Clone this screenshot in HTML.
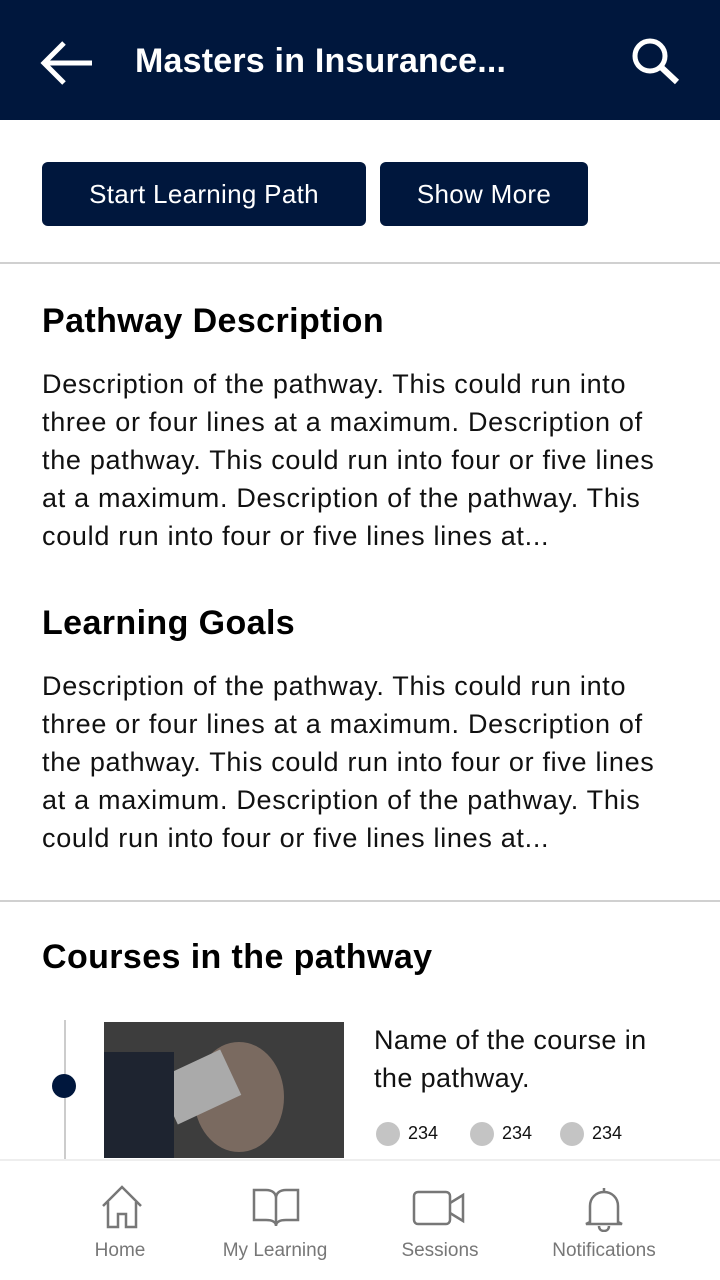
<!DOCTYPE html>
<html><head><meta charset="utf-8"><style>
*{margin:0;padding:0;box-sizing:border-box}
body{width:720px;height:1280px;overflow:hidden;background:#fff;font-family:"Liberation Sans",sans-serif;color:#111;position:relative}
.hdr{position:absolute;top:0;left:0;width:720px;height:120px;background:#00173d}
.title{position:absolute;left:135px;top:42px;color:#fff;font-weight:bold;font-size:34px;letter-spacing:0.2px}
.btn{position:absolute;top:162px;height:64px;background:#00173d;color:#fff;border-radius:6px;font-size:26px;display:flex;align-items:center;justify-content:center;letter-spacing:0.3px}
.hr{position:absolute;left:0;width:720px;height:2px;background:#d0d0d0}
h2{position:absolute;left:42px;font-size:34px;font-weight:bold;color:#000;letter-spacing:0.4px;white-space:nowrap}
.p{position:absolute;left:42px;font-size:27px;line-height:38px;color:#111;white-space:nowrap;letter-spacing:0.7px}
.nav{position:absolute;top:1159px;left:0;width:720px;height:121px;background:#fff;border-top:2px solid #eee}
.ni{position:absolute;top:1240px;font-size:19px;color:#777;transform:translateX(-50%)}
.dot{display:inline-block;width:24px;height:24px;border-radius:50%;background:#c4c4c4;vertical-align:middle;margin-right:8px}
</style></head><body>
<div class="hdr">
<svg style="position:absolute;left:38px;top:38px" width="58" height="50" viewBox="0 0 58 50"><path d="M54 25H6M26 5L6 25l20 20" stroke="#fff" stroke-width="5" fill="none"/></svg>
<div class="title">Masters in Insurance...</div>
<svg style="position:absolute;left:630px;top:36px" width="52" height="50" viewBox="0 0 52 50"><circle cx="20" cy="20" r="15" stroke="#fff" stroke-width="5" fill="none"/><path d="M31 31l16 15" stroke="#fff" stroke-width="6"/></svg>
</div>
<div class="btn" style="left:42px;width:324px">Start Learning Path</div>
<div class="btn" style="left:380px;width:208px">Show More</div>
<div class="hr" style="top:262px"></div>
<h2 style="top:302px">Pathway Description</h2>
<div class="p" style="top:365px">Description of the pathway. This could run into<br>three or four lines at a maximum. Description of<br>the pathway. This could run into four or five lines<br>at a maximum. Description of the pathway. This<br>could run into four or five lines lines at...</div>
<h2 style="top:604px">Learning Goals</h2>
<div class="p" style="top:667px">Description of the pathway. This could run into<br>three or four lines at a maximum. Description of<br>the pathway. This could run into four or five lines<br>at a maximum. Description of the pathway. This<br>could run into four or five lines lines at...</div>
<div class="hr" style="top:900px"></div>
<h2 style="top:938px">Courses in the pathway</h2>
<div style="position:absolute;left:64px;top:1020px;width:2px;height:140px;background:#ccc"></div>
<div style="position:absolute;left:52px;top:1074px;width:24px;height:24px;border-radius:50%;background:#00173d"></div>
<div style="position:absolute;left:104px;top:1022px;width:240px;height:136px;background:#3d3d3d;overflow:hidden">
<div style="position:absolute;left:90px;top:20px;width:90px;height:110px;border-radius:50%;background:#7a6a60"></div>
<div style="position:absolute;left:60px;top:40px;width:70px;height:50px;background:#aaa;transform:rotate(-25deg)"></div>
<div style="position:absolute;left:0;top:30px;width:70px;height:106px;background:#1e2430"></div>
</div>
<div style="position:absolute;left:374px;top:1021px;font-size:27px;line-height:38px;white-space:nowrap;letter-spacing:0.4px">Name of the course in<br>the pathway.</div>
<div style="position:absolute;left:376px;top:1122px;font-size:18px"><span class="dot"></span>234</div>
<div style="position:absolute;left:470px;top:1122px;font-size:18px"><span class="dot"></span>234</div>
<div style="position:absolute;left:560px;top:1122px;font-size:18px"><span class="dot"></span>234</div>
<div class="nav"></div>
<svg style="position:absolute;left:100px;top:1184px" width="44" height="46" viewBox="0 0 44 46"><path d="M3 22L22 3l19 19M8 18v25h10V30h8v13h10V18" stroke="#777" stroke-width="2.5" fill="none"/></svg>
<svg style="position:absolute;left:252px;top:1188px" width="48" height="40" viewBox="0 0 48 40"><path d="M2 2h12c6 0 10 3 10 8v28c0-4-4-6-10-6H2zM46 2H34c-6 0-10 3-10 8v28c0-4 4-6 10-6h12z" stroke="#777" stroke-width="2.5" fill="none"/></svg>
<svg style="position:absolute;left:412px;top:1190px" width="54" height="36" viewBox="0 0 54 36"><rect x="2" y="2" width="36" height="32" rx="4" stroke="#777" stroke-width="2.5" fill="none"/><path d="M38 13l13-8v26l-13-8" stroke="#777" stroke-width="2.5" fill="none"/></svg>
<svg style="position:absolute;left:584px;top:1186px" width="40" height="46" viewBox="0 0 40 46"><path d="M20 2v4M6 36V20c0-8 6-14 14-14s14 6 14 14v16l4 2H2zM15 40c0 3 2 5 5 5s5-2 5-5" stroke="#777" stroke-width="2.5" fill="none"/></svg>
<div class="ni" style="left:120px">Home</div>
<div class="ni" style="left:275px">My Learning</div>
<div class="ni" style="left:440px">Sessions</div>
<div class="ni" style="left:604px">Notifications</div>
</body></html>
